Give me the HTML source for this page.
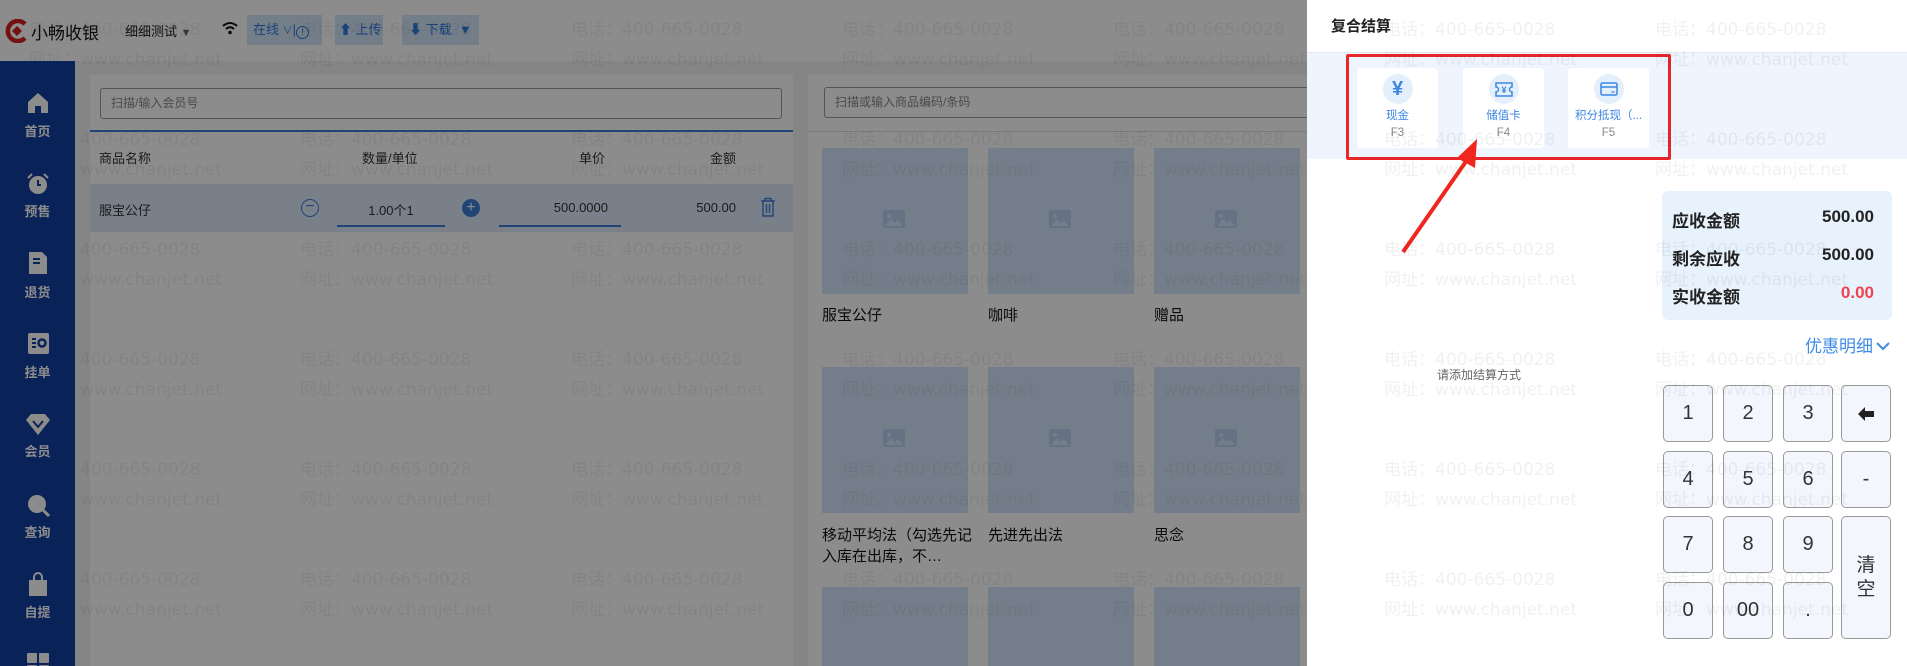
<!DOCTYPE html>
<html style="overflow:hidden;width:1907px;height:666px"><head><meta charset="utf-8">
<style>
*{margin:0;padding:0;box-sizing:border-box}
html,body{width:1907px;height:666px;overflow:hidden}
body{background:#f2f3f5;font-family:"Liberation Sans","Noto Sans CJK SC",sans-serif;color:#333}
#root{position:relative;width:1907px;height:666px;overflow:hidden;background:#f2f3f5}
.abs{position:absolute}
#top{left:0;top:0;width:1907px;height:61px;background:#fff}
#side{left:0;top:61px;width:75px;height:605px;background:#123f9e;z-index:2}
.si{position:absolute;left:0;width:75px;text-align:center;color:#fff;font-size:13px;font-weight:bold}
.card{background:#fff}
.inp{border:1px solid #999;border-radius:3px;font-size:12px;color:#888;padding-left:10px;line-height:29px}
.tile{position:absolute;width:146px;height:146px;background:#d3e5fb}
.tile svg{position:absolute;left:61px;top:62px}
.pn{position:absolute;font-size:15px;color:#111;line-height:21px}
#ov{left:0;top:0;width:1307px;height:666px;background:rgba(0,0,0,0.45);z-index:3}
#rp{left:1307px;top:0;width:600px;height:666px;background:#fff;z-index:4}
#wm{left:0;top:0;width:1907px;height:666px;z-index:6;pointer-events:none;clip-path:polygon(0 0,100% 0,100% 100%,75px 100%,75px 61px,0 61px);font-family:"DejaVu Sans","Noto Sans CJK SC",sans-serif;font-size:17px;color:rgba(0,0,0,0.06);white-space:nowrap}
#wm div{position:absolute}
.pc{position:absolute;top:68px;width:81px;height:80px;background:#fff;border-radius:3px;text-align:center}
.pc .c{width:30px;height:30px;border-radius:50%;background:#e4effc;margin:6px auto 0;display:flex;align-items:center;justify-content:center}
.pc .l{font-size:11.5px;color:#3b85e3;margin-top:5px;line-height:14px;white-space:nowrap}
.pc .f{font-size:11.5px;color:#888;line-height:16px;margin-top:2px}
.k{position:absolute;width:50px;height:57px;background:#f3f7fd;border:1px solid #999;border-radius:5px;font-size:20px;color:#333;display:flex;align-items:center;justify-content:center}
.sr{position:absolute;left:10px;right:18px;font-size:17px;font-weight:bold;color:#222}
.sr b{position:absolute;right:0;top:0}
.tb{position:absolute;top:15px;height:30px;background:#d4e5fa;font-size:13px;color:#2d7be0;line-height:30px;white-space:nowrap}
</style></head><body><div id="root">

<div id="top" class="abs">
  <svg class="abs" style="left:5px;top:19px" width="24" height="24" viewBox="0 0 24 24"><path d="M20 5 A10 10 0 1 0 20 19" fill="none" stroke="#d8201f" stroke-width="4.5"/><path d="M12 7 L17 12 L12 17 L7 12Z" fill="#d8201f"/></svg>
  <div class="abs" style="left:31px;top:19px;font-size:17px;color:#111">小畅收银</div>
  <div class="abs" style="left:125px;top:21px;font-size:13px;color:#222">细细测试 <span style="color:#666;font-size:11px">▼</span></div>
  <svg class="abs" style="left:222px;top:21px" width="16" height="14" viewBox="0 0 16 14"><path d="M1 5 Q8 -1 15 5" fill="none" stroke="#111" stroke-width="2"/><path d="M4 8 Q8 4.5 12 8" fill="none" stroke="#111" stroke-width="2"/><circle cx="8" cy="11.5" r="1.8" fill="#111"/></svg>
  <div class="tb" style="left:247px;width:75px;padding-left:6px">在线 <span style="font-size:10px">∨</span>|<span style="display:inline-block;width:13px;height:13px;border:1.3px solid #2d7be0;border-radius:50%;font-size:9px;line-height:11px;text-align:center;vertical-align:-1px">!</span></div>
  <div class="tb" style="left:335px;width:48px;padding-left:4px">⬆ 上传</div>
  <div class="tb" style="left:402px;width:77px;padding-left:7px">⬇ 下载 &nbsp;▼</div>
</div>

<div id="side" class="abs">
  <svg class="abs" style="left:27px;top:31px" width="22" height="22" viewBox="0 0 22 22"><path d="M11 1 L21 10 V21 H14 V14 H8 V21 H1 V10Z" fill="#fff"/></svg>
  <div class="si" style="top:60px">首页</div>
  <svg class="abs" style="left:26px;top:111px" width="24" height="24" viewBox="0 0 24 24"><circle cx="12" cy="13" r="9" fill="#fff"/><path d="M12 8 V13 H15" stroke="#123f9e" stroke-width="2" fill="none"/><path d="M2 6 L6 2 M22 6 L18 2" stroke="#fff" stroke-width="2"/></svg>
  <div class="si" style="top:140px">预售</div>
  <svg class="abs" style="left:28px;top:190px" width="20" height="24" viewBox="0 0 20 24"><path d="M1 1 H14 L19 6 V23 H1Z" fill="#fff"/><path d="M5 8 H12 M5 12 H12" stroke="#123f9e" stroke-width="2"/></svg>
  <div class="si" style="top:221px">退货</div>
  <svg class="abs" style="left:28px;top:270px" width="21" height="23" viewBox="0 0 21 23"><rect x="0" y="2" width="21" height="21" rx="2" fill="#fff"/><path d="M4 8 H8 M4 12 H8 M4 16 H8" stroke="#123f9e" stroke-width="2"/><circle cx="14" cy="12" r="3.5" fill="none" stroke="#123f9e" stroke-width="2.5"/></svg>
  <div class="si" style="top:301px">挂单</div>
  <svg class="abs" style="left:26px;top:352px" width="24" height="22" viewBox="0 0 24 22"><path d="M5 1 H19 L24 7 L12 22 L0 7Z" fill="#fff"/><path d="M7 8 L12 14 L17 8" stroke="#123f9e" stroke-width="2" fill="none"/></svg>
  <div class="si" style="top:380px">会员</div>
  <svg class="abs" style="left:27px;top:433px" width="23" height="23" viewBox="0 0 23 23"><circle cx="10" cy="10" r="9" fill="#fff"/><path d="M16 16 L22 22" stroke="#fff" stroke-width="3"/></svg>
  <div class="si" style="top:461px">查询</div>
  <svg class="abs" style="left:28px;top:511px" width="20" height="24" viewBox="0 0 20 24"><path d="M6 8 V5 A4 4 0 0 1 14 5 V8" stroke="#fff" stroke-width="2" fill="none"/><rect x="1" y="8" width="18" height="16" fill="#fff"/></svg>
  <div class="si" style="top:541px">自提</div>
  <div class="abs" style="left:27px;top:592px;width:10px;height:10px;background:#fff;border-radius:1px"></div>
  <div class="abs" style="left:39px;top:592px;width:10px;height:10px;background:#fff;border-radius:1px"></div>
  <div class="abs" style="left:27px;top:604px;width:10px;height:10px;background:#fff;border-radius:1px"></div>
  <div class="abs" style="left:39px;top:604px;width:10px;height:10px;background:#fff;border-radius:1px"></div>
</div>

<div class="abs card" style="left:90px;top:75px;width:703px;height:591px">
  <div class="abs inp" style="left:10px;top:13px;width:682px;height:31px">扫描/输入会员号</div>
  <div class="abs" style="left:0;top:55px;width:703px;height:2px;background:#3b7fd6"></div>
  <div class="abs" style="left:9px;top:73px;font-size:13px">商品名称</div>
  <div class="abs" style="left:272px;top:73px;font-size:13px">数量/单位</div>
  <div class="abs" style="left:489px;top:73px;font-size:13px">单价</div>
  <div class="abs" style="left:620px;top:73px;font-size:13px">金额</div>
  <div class="abs" style="left:0;top:109px;width:703px;height:48px;background:#dce9fa"></div>
  <div class="abs" style="left:9px;top:125px;font-size:13px">服宝公仔</div>
  <div class="abs" style="left:211px;top:124px;width:18px;height:18px;border:1.5px solid #3b7fd6;border-radius:50%;color:#3b7fd6;font-size:16px;line-height:14px;text-align:center">−</div>
  <div class="abs" style="left:247px;top:125px;width:108px;text-align:center;font-size:13px">1.00个1</div>
  <div class="abs" style="left:247px;top:150px;width:108px;height:1.5px;background:#3b7fd6"></div>
  <div class="abs" style="left:372px;top:124px;width:18px;height:18px;background:#3b7fd6;border-radius:50%;color:#fff;font-size:16px;line-height:18px;text-align:center">+</div>
  <div class="abs" style="left:409px;top:125px;width:109px;text-align:right;font-size:13px">500.0000</div>
  <div class="abs" style="left:409px;top:150px;width:122px;height:1.5px;background:#3b7fd6"></div>
  <div class="abs" style="left:560px;top:125px;width:86px;text-align:right;font-size:13px">500.00</div>
  <svg class="abs" style="left:670px;top:122px" width="16" height="20" viewBox="0 0 16 20"><path d="M1 4 H15 M5 4 V1.5 H11 V4 M3 4 V19 H13 V4 M6.5 7 V16 M9.5 7 V16" stroke="#3b7fd6" stroke-width="1.4" fill="none"/></svg>
</div>

<div class="abs card" style="left:808px;top:75px;width:520px;height:591px">
  <div class="abs inp" style="left:16px;top:12px;width:520px;height:31px">扫描或输入商品编码/条码</div>
  <div class="abs" style="left:0;top:56px;width:520px;height:1px;background:#ddd"></div>
</div>
<div class="tile" style="left:822px;top:148px"><svg width="22" height="18" viewBox="0 0 22 18"><rect width="22" height="18" rx="2" fill="#b7d0ee"/><circle cx="6" cy="6" r="2.2" fill="#d3e5fb"/><path d="M2 16 L8 9 L12 13 L15 10 L20 16Z" fill="#d3e5fb"/></svg></div>
<div class="tile" style="left:988px;top:148px"><svg width="22" height="18" viewBox="0 0 22 18"><rect width="22" height="18" rx="2" fill="#b7d0ee"/><circle cx="6" cy="6" r="2.2" fill="#d3e5fb"/><path d="M2 16 L8 9 L12 13 L15 10 L20 16Z" fill="#d3e5fb"/></svg></div>
<div class="tile" style="left:1154px;top:148px"><svg width="22" height="18" viewBox="0 0 22 18"><rect width="22" height="18" rx="2" fill="#b7d0ee"/><circle cx="6" cy="6" r="2.2" fill="#d3e5fb"/><path d="M2 16 L8 9 L12 13 L15 10 L20 16Z" fill="#d3e5fb"/></svg></div>
<div class="pn" style="left:822px;top:305px">服宝公仔</div>
<div class="pn" style="left:988px;top:305px">咖啡</div>
<div class="pn" style="left:1154px;top:305px">赠品</div>
<div class="tile" style="left:822px;top:367px"><svg width="22" height="18" viewBox="0 0 22 18"><rect width="22" height="18" rx="2" fill="#b7d0ee"/><circle cx="6" cy="6" r="2.2" fill="#d3e5fb"/><path d="M2 16 L8 9 L12 13 L15 10 L20 16Z" fill="#d3e5fb"/></svg></div>
<div class="tile" style="left:988px;top:367px"><svg width="22" height="18" viewBox="0 0 22 18"><rect width="22" height="18" rx="2" fill="#b7d0ee"/><circle cx="6" cy="6" r="2.2" fill="#d3e5fb"/><path d="M2 16 L8 9 L12 13 L15 10 L20 16Z" fill="#d3e5fb"/></svg></div>
<div class="tile" style="left:1154px;top:367px"><svg width="22" height="18" viewBox="0 0 22 18"><rect width="22" height="18" rx="2" fill="#b7d0ee"/><circle cx="6" cy="6" r="2.2" fill="#d3e5fb"/><path d="M2 16 L8 9 L12 13 L15 10 L20 16Z" fill="#d3e5fb"/></svg></div>
<div class="pn" style="left:822px;top:525px;width:150px">移动平均法（勾选先记入库在出库，不…</div>
<div class="pn" style="left:988px;top:525px">先进先出法</div>
<div class="pn" style="left:1154px;top:525px">思念</div>
<div class="tile" style="left:822px;top:587px;height:79px"></div>
<div class="tile" style="left:988px;top:587px;height:79px"></div>
<div class="tile" style="left:1154px;top:587px;height:79px"></div>

<div id="ov" class="abs"></div>

<div id="rp" class="abs">
  <div class="abs" style="left:24px;top:15px;font-size:15px;font-weight:bold;color:#222">复合结算</div>
  <div class="abs" style="left:0;top:52px;width:600px;height:107px;background:#eef5fe;border-top:1px solid #e2e8f0"></div>
  <div class="pc" style="left:50px"><div class="c"><span style="color:#3b85e3;font-size:20px;font-weight:bold">¥</span></div><div class="l">现金</div><div class="f">F3</div></div>
  <div class="pc" style="left:156px"><div class="c"><svg width="18" height="15" viewBox="0 0 18 15"><path d="M1 1 H17 V5 A2.5 2.5 0 0 0 17 10 V14 H1 V10 A2.5 2.5 0 0 0 1 5Z" fill="none" stroke="#3b85e3" stroke-width="1.5"/><text x="9" y="11" font-size="9" font-weight="bold" fill="#3b85e3" text-anchor="middle" font-family="Liberation Sans">¥</text></svg></div><div class="l">储值卡</div><div class="f">F4</div></div>
  <div class="pc" style="left:261px"><div class="c"><svg width="18" height="14" viewBox="0 0 18 14"><rect x="1" y="1" width="16" height="12" rx="1.5" fill="none" stroke="#3b85e3" stroke-width="1.5"/><path d="M1 5 H17" stroke="#3b85e3" stroke-width="1.5"/><path d="M11 10 H15" stroke="#3b85e3" stroke-width="1"/></svg></div><div class="l">积分抵现（...</div><div class="f">F5</div></div>
  <div class="abs" style="left:39px;top:54px;width:325px;height:106px;border:3px solid #e8262a;border-radius:2px"></div>
  <svg class="abs" style="left:0;top:0" width="300" height="300"><path d="M96 252 L160 160" stroke="#f0261f" stroke-width="4"/><path d="M170 139 L150 158 L168 168Z" fill="#f0261f"/></svg>
  <div class="abs" style="left:130px;top:366px;font-size:12px;color:#666">请添加结算方式</div>
  <div class="abs" style="left:355px;top:191px;width:230px;height:129px;background:#e7f2fd;border-radius:6px">
    <div class="sr" style="top:16px">应收金额<b>500.00</b></div>
    <div class="sr" style="top:54px">剩余应收<b>500.00</b></div>
    <div class="sr" style="top:92px">实收金额<b style="color:#ef4450">0.00</b></div>
  </div>
  <div class="abs" style="left:498px;top:332px;font-size:17px;color:#3d8be6">优惠明细<svg width="16" height="12" viewBox="0 0 16 12" style="margin-left:2px"><path d="M2 3 L8 9 L14 3" stroke="#3d8be6" stroke-width="2" fill="none"/></svg></div>
  <div class="k" style="left:356px;top:385px">1</div>
  <div class="k" style="left:416px;top:385px">2</div>
  <div class="k" style="left:476px;top:385px">3</div>
  <div class="k" style="left:534px;top:385px"><svg width="16" height="14" viewBox="0 0 16 14"><path d="M0 7 L7 0 V4 H16 V10 H7 V14Z" fill="#222"/></svg></div>
  <div class="k" style="left:356px;top:451px">4</div>
  <div class="k" style="left:416px;top:451px">5</div>
  <div class="k" style="left:476px;top:451px">6</div>
  <div class="k" style="left:534px;top:451px">-</div>
  <div class="k" style="left:356px;top:516px">7</div>
  <div class="k" style="left:416px;top:516px">8</div>
  <div class="k" style="left:476px;top:516px">9</div>
  <div class="k" style="left:534px;top:516px;height:123px;line-height:24px;text-align:center;flex-direction:column;font-size:19px">清<br>空</div>
  <div class="k" style="left:356px;top:582px">0</div>
  <div class="k" style="left:416px;top:582px">00</div>
  <div class="k" style="left:476px;top:582px">.</div>
</div>

<div id="wm" class="abs">
<div style="left:29px;top:15px">电话：400-665-0028</div><div style="left:29px;top:45px">网址：www.chanjet.net</div>
<div style="left:300px;top:15px">电话：400-665-0028</div><div style="left:300px;top:45px">网址：www.chanjet.net</div>
<div style="left:571px;top:15px">电话：400-665-0028</div><div style="left:571px;top:45px">网址：www.chanjet.net</div>
<div style="left:842px;top:15px">电话：400-665-0028</div><div style="left:842px;top:45px">网址：www.chanjet.net</div>
<div style="left:1113px;top:15px">电话：400-665-0028</div><div style="left:1113px;top:45px">网址：www.chanjet.net</div>
<div style="left:1384px;top:15px">电话：400-665-0028</div><div style="left:1384px;top:45px">网址：www.chanjet.net</div>
<div style="left:1655px;top:15px">电话：400-665-0028</div><div style="left:1655px;top:45px">网址：www.chanjet.net</div>

<div style="left:29px;top:125px">电话：400-665-0028</div><div style="left:29px;top:155px">网址：www.chanjet.net</div>
<div style="left:300px;top:125px">电话：400-665-0028</div><div style="left:300px;top:155px">网址：www.chanjet.net</div>
<div style="left:571px;top:125px">电话：400-665-0028</div><div style="left:571px;top:155px">网址：www.chanjet.net</div>
<div style="left:842px;top:125px">电话：400-665-0028</div><div style="left:842px;top:155px">网址：www.chanjet.net</div>
<div style="left:1113px;top:125px">电话：400-665-0028</div><div style="left:1113px;top:155px">网址：www.chanjet.net</div>
<div style="left:1384px;top:125px">电话：400-665-0028</div><div style="left:1384px;top:155px">网址：www.chanjet.net</div>
<div style="left:1655px;top:125px">电话：400-665-0028</div><div style="left:1655px;top:155px">网址：www.chanjet.net</div>

<div style="left:29px;top:235px">电话：400-665-0028</div><div style="left:29px;top:265px">网址：www.chanjet.net</div>
<div style="left:300px;top:235px">电话：400-665-0028</div><div style="left:300px;top:265px">网址：www.chanjet.net</div>
<div style="left:571px;top:235px">电话：400-665-0028</div><div style="left:571px;top:265px">网址：www.chanjet.net</div>
<div style="left:842px;top:235px">电话：400-665-0028</div><div style="left:842px;top:265px">网址：www.chanjet.net</div>
<div style="left:1113px;top:235px">电话：400-665-0028</div><div style="left:1113px;top:265px">网址：www.chanjet.net</div>
<div style="left:1384px;top:235px">电话：400-665-0028</div><div style="left:1384px;top:265px">网址：www.chanjet.net</div>
<div style="left:1655px;top:235px">电话：400-665-0028</div><div style="left:1655px;top:265px">网址：www.chanjet.net</div>

<div style="left:29px;top:345px">电话：400-665-0028</div><div style="left:29px;top:375px">网址：www.chanjet.net</div>
<div style="left:300px;top:345px">电话：400-665-0028</div><div style="left:300px;top:375px">网址：www.chanjet.net</div>
<div style="left:571px;top:345px">电话：400-665-0028</div><div style="left:571px;top:375px">网址：www.chanjet.net</div>
<div style="left:842px;top:345px">电话：400-665-0028</div><div style="left:842px;top:375px">网址：www.chanjet.net</div>
<div style="left:1113px;top:345px">电话：400-665-0028</div><div style="left:1113px;top:375px">网址：www.chanjet.net</div>
<div style="left:1384px;top:345px">电话：400-665-0028</div><div style="left:1384px;top:375px">网址：www.chanjet.net</div>
<div style="left:1655px;top:345px">电话：400-665-0028</div><div style="left:1655px;top:375px">网址：www.chanjet.net</div>

<div style="left:29px;top:455px">电话：400-665-0028</div><div style="left:29px;top:485px">网址：www.chanjet.net</div>
<div style="left:300px;top:455px">电话：400-665-0028</div><div style="left:300px;top:485px">网址：www.chanjet.net</div>
<div style="left:571px;top:455px">电话：400-665-0028</div><div style="left:571px;top:485px">网址：www.chanjet.net</div>
<div style="left:842px;top:455px">电话：400-665-0028</div><div style="left:842px;top:485px">网址：www.chanjet.net</div>
<div style="left:1113px;top:455px">电话：400-665-0028</div><div style="left:1113px;top:485px">网址：www.chanjet.net</div>
<div style="left:1384px;top:455px">电话：400-665-0028</div><div style="left:1384px;top:485px">网址：www.chanjet.net</div>
<div style="left:1655px;top:455px">电话：400-665-0028</div><div style="left:1655px;top:485px">网址：www.chanjet.net</div>

<div style="left:29px;top:565px">电话：400-665-0028</div><div style="left:29px;top:595px">网址：www.chanjet.net</div>
<div style="left:300px;top:565px">电话：400-665-0028</div><div style="left:300px;top:595px">网址：www.chanjet.net</div>
<div style="left:571px;top:565px">电话：400-665-0028</div><div style="left:571px;top:595px">网址：www.chanjet.net</div>
<div style="left:842px;top:565px">电话：400-665-0028</div><div style="left:842px;top:595px">网址：www.chanjet.net</div>
<div style="left:1113px;top:565px">电话：400-665-0028</div><div style="left:1113px;top:595px">网址：www.chanjet.net</div>
<div style="left:1384px;top:565px">电话：400-665-0028</div><div style="left:1384px;top:595px">网址：www.chanjet.net</div>
<div style="left:1655px;top:565px">电话：400-665-0028</div><div style="left:1655px;top:595px">网址：www.chanjet.net</div>
</div>
</div></body></html>
